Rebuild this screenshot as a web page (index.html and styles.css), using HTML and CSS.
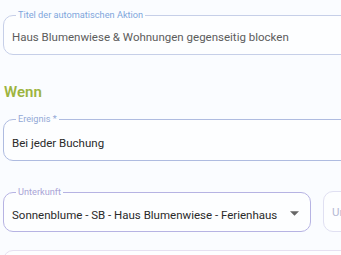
FILE: index.html
```html
<!DOCTYPE html>
<html lang="de">
<head>
<meta charset="utf-8">
<link rel="stylesheet" href="styles.css">
</head>
<body>
<div class="page">
  <fieldset class="field field-title">
    <legend>Titel der automatischen Aktion</legend>
    <div class="value muted">Haus Blumenwiese &amp; Wohnungen gegenseitig blocken</div>
  </fieldset>

  <h2 class="section">Wenn</h2>

  <fieldset class="field field-event">
    <legend>Ereignis *</legend>
    <div class="value">Bei jeder Buchung</div>
  </fieldset>

  <div class="row">
    <fieldset class="field field-select">
      <legend>Unterkunft</legend>
      <div class="value select">
        <span>Sonnenblume - SB - Haus Blumenwiese - Ferienhaus</span>
        <svg class="caret" width="9" height="5" viewBox="0 0 10 5"><path d="M0 0h10L5 5z" fill="#666"/></svg>
      </div>
    </fieldset>
    <div class="field field-next">
      <div class="value placeholder">Unterkunft</div>
    </div>
  </div>

  <div class="field field-bottom"></div>
</div>
</body>
</html>
```

FILE: styles.css
```css
html, body {
  margin: 0;
  padding: 0;
  background: #fafcff;
  overflow: hidden;
}
body {
  font-family: Roboto, "Liberation Sans", sans-serif;
  width: 341px;
  height: 255px;
}
.page {
  width: 460px;
  padding: 9px 0 0 3px;
  display: flex;
  flex-direction: column;
}
.field {
  margin: 0;
  border: 1px solid #c6cfe8;
  border-radius: 10px;
  padding: 0 8px;
  background: #fdfeff;
  min-width: 0;
}
.field legend {
  font-size: 9.2px;
  line-height: 12px;
  padding: 0 2px;
  margin-left: 4px;
  color: #7fa6dc;
}
.value {
  font-size: 11.5px;
  line-height: 20px;
  color: #2a2a2a;
  white-space: nowrap;
}
.value.muted { color: #5c5c5c; }
.field-title {
  width: 420px;
}
.field-title .value { padding: 6px 0 7px; }
.section {
  margin: 27px 0 11px 1px;
  font-size: 15px;
  line-height: 20px;
  font-weight: 600;
  color: #9db43f;
}
.field-event {
  width: 420px;
  border-color: #aebbe0;
}
.field-event legend { color: #93a9d6; }
.field-event .value { padding: 8px 0 7px; }
.row {
  margin-top: 25px;
  display: flex;
  gap: 12px;
  align-items: flex-end;
}
.field-select {
  width: 308px;
  box-sizing: border-box;
  border-color: #b6b3e3;
}
.field-select legend { color: #aaa5d6; }
.field-select .value { padding: 7px 0 6px; }
.select {
  display: flex;
  align-items: center;
  justify-content: space-between;
}
.caret { margin-right: 3px; margin-top: -4px; }
.field-next {
  width: 120px;
  height: 41px;
  box-sizing: border-box;
  border-color: #e0e0f2;
  display: flex;
  align-items: center;
}
.placeholder { color: #b5b9d4; }
.field-bottom {
  margin-top: 18px;
  width: 420px;
  height: 30px;
  border-color: #e6e0f1;
}
```
